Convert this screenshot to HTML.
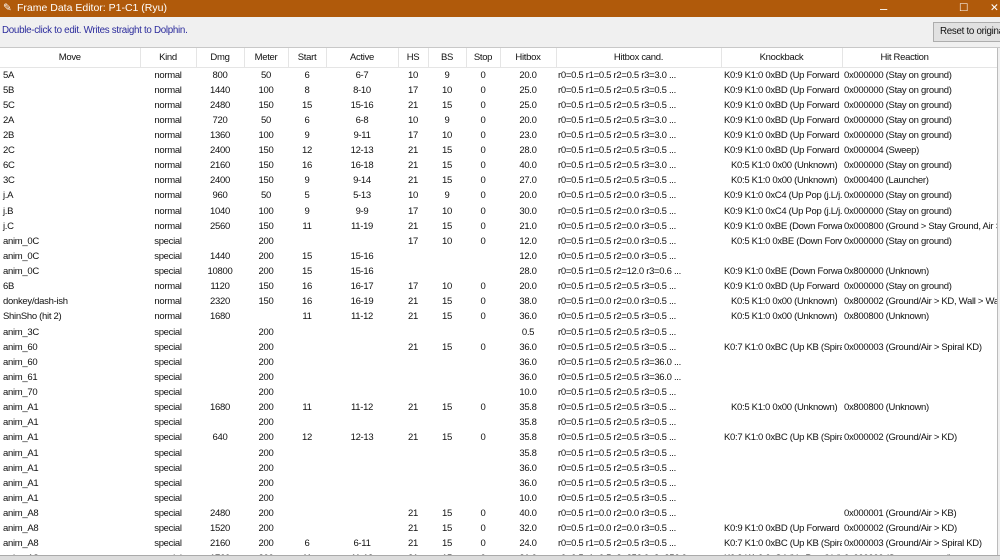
<!DOCTYPE html>
<html><head><meta charset="utf-8"><style>
*{margin:0;padding:0;box-sizing:border-box}
body{width:1000px;height:560px;overflow:hidden;background:#f0f0f0;font-family:"Liberation Sans",sans-serif;font-size:9.5px;letter-spacing:-0.3px;color:#111;position:relative}
.title{position:absolute;left:0;top:0;width:1000px;height:17px;background:#b05a0b;color:#fff;font-size:10.5px;line-height:17px;letter-spacing:0}
.title span{position:absolute;left:17px}
.tb{position:absolute;top:17px;left:0;width:1000px;height:31px;background:#f0f0f0;border-bottom:1px solid #c8c8c8}
.tb .msg{position:absolute;left:2px;top:8px;color:#2b2b9c;font-size:9.8px}
.btn{position:absolute;left:933px;top:5px;width:80px;height:20px;border:1px solid #adadad;background:#e1e1e1;font-size:9.8px;line-height:18px;padding-left:6px;white-space:nowrap;overflow:hidden}
.grid{position:absolute;left:0;top:48px;width:998px;height:507px;background:#fff;overflow:hidden;border-right:1px solid #bbb}
.bot{position:absolute;left:0;top:555px;width:1000px;height:5px;background:#dcdcdc;border-top:1px solid #aaa}
table{border-collapse:collapse;table-layout:fixed;width:1100px}
td,th{white-space:nowrap;overflow:hidden;padding:0;font-weight:normal}
th{height:19px;border-right:1px solid #e5e5e5;border-bottom:1px solid #e5e5e5;text-align:center}
th:last-child{text-align:left;padding-left:38px}
td{height:15.13px;line-height:15px;text-align:center}
td:first-child{text-align:left;padding-left:3px}
td:nth-child(11),td:nth-child(12),td:nth-child(13){text-align:left;padding-left:2px}
td:nth-child(12){padding-left:3px}
.i{padding-left:10px!important}
</style></head><body>
<div class="title"><span>Frame Data Editor: P1-C1 (Ryu)</span><span style="left:3px">✎</span><span style="left:880px;font-size:13px">–</span><span style="left:959px">☐</span><span style="left:990px">✕</span></div>
<div class="tb"><div class="msg">Double-click to edit. Writes straight to Dolphin.</div><div class="btn">Reset to original</div></div>
<div class="grid"><table>
<colgroup><col style="width:140px"><col style="width:56px"><col style="width:48px"><col style="width:44px"><col style="width:38px"><col style="width:72px"><col style="width:30px"><col style="width:38px"><col style="width:34px"><col style="width:56px"><col style="width:165px"><col style="width:121px"><col style="width:258px"></colgroup>
<tr><th>Move</th><th>Kind</th><th>Dmg</th><th>Meter</th><th>Start</th><th>Active</th><th>HS</th><th>BS</th><th>Stop</th><th>Hitbox</th><th>Hitbox cand.</th><th>Knockback</th><th>Hit Reaction</th></tr>
<tr><td>5A</td><td>normal</td><td>800</td><td>50</td><td>6</td><td>6-7</td><td>10</td><td>9</td><td>0</td><td>20.0</td><td>r0=0.5 r1=0.5 r2=0.5 r3=3.0 ...</td><td>K0:9 K1:0 0xBD (Up Forward K</td><td>0x000000 (Stay on ground)</td></tr>
<tr><td>5B</td><td>normal</td><td>1440</td><td>100</td><td>8</td><td>8-10</td><td>17</td><td>10</td><td>0</td><td>25.0</td><td>r0=0.5 r1=0.5 r2=0.5 r3=0.5 ...</td><td>K0:9 K1:0 0xBD (Up Forward K</td><td>0x000000 (Stay on ground)</td></tr>
<tr><td>5C</td><td>normal</td><td>2480</td><td>150</td><td>15</td><td>15-16</td><td>21</td><td>15</td><td>0</td><td>25.0</td><td>r0=0.5 r1=0.5 r2=0.5 r3=0.5 ...</td><td>K0:9 K1:0 0xBD (Up Forward K</td><td>0x000000 (Stay on ground)</td></tr>
<tr><td>2A</td><td>normal</td><td>720</td><td>50</td><td>6</td><td>6-8</td><td>10</td><td>9</td><td>0</td><td>20.0</td><td>r0=0.5 r1=0.5 r2=0.5 r3=3.0 ...</td><td>K0:9 K1:0 0xBD (Up Forward K</td><td>0x000000 (Stay on ground)</td></tr>
<tr><td>2B</td><td>normal</td><td>1360</td><td>100</td><td>9</td><td>9-11</td><td>17</td><td>10</td><td>0</td><td>23.0</td><td>r0=0.5 r1=0.5 r2=0.5 r3=3.0 ...</td><td>K0:9 K1:0 0xBD (Up Forward K</td><td>0x000000 (Stay on ground)</td></tr>
<tr><td>2C</td><td>normal</td><td>2400</td><td>150</td><td>12</td><td>12-13</td><td>21</td><td>15</td><td>0</td><td>28.0</td><td>r0=0.5 r1=0.5 r2=0.5 r3=0.5 ...</td><td>K0:9 K1:0 0xBD (Up Forward K</td><td>0x000004 (Sweep)</td></tr>
<tr><td>6C</td><td>normal</td><td>2160</td><td>150</td><td>16</td><td>16-18</td><td>21</td><td>15</td><td>0</td><td>40.0</td><td>r0=0.5 r1=0.5 r2=0.5 r3=3.0 ...</td><td class="i">K0:5 K1:0 0x00 (Unknown)</td><td>0x000000 (Stay on ground)</td></tr>
<tr><td>3C</td><td>normal</td><td>2400</td><td>150</td><td>9</td><td>9-14</td><td>21</td><td>15</td><td>0</td><td>27.0</td><td>r0=0.5 r1=0.5 r2=0.5 r3=0.5 ...</td><td class="i">K0:5 K1:0 0x00 (Unknown)</td><td>0x000400 (Launcher)</td></tr>
<tr><td>j.A</td><td>normal</td><td>960</td><td>50</td><td>5</td><td>5-13</td><td>10</td><td>9</td><td>0</td><td>20.0</td><td>r0=0.5 r1=0.5 r2=0.0 r3=0.5 ...</td><td>K0:9 K1:0 0xC4 (Up Pop (j.L/j.</td><td>0x000000 (Stay on ground)</td></tr>
<tr><td>j.B</td><td>normal</td><td>1040</td><td>100</td><td>9</td><td>9-9</td><td>17</td><td>10</td><td>0</td><td>30.0</td><td>r0=0.5 r1=0.5 r2=0.0 r3=0.5 ...</td><td>K0:9 K1:0 0xC4 (Up Pop (j.L/j.</td><td>0x000000 (Stay on ground)</td></tr>
<tr><td>j.C</td><td>normal</td><td>2560</td><td>150</td><td>11</td><td>11-19</td><td>21</td><td>15</td><td>0</td><td>21.0</td><td>r0=0.5 r1=0.5 r2=0.0 r3=0.5 ...</td><td>K0:9 K1:0 0xBE (Down Forwar</td><td>0x000800 (Ground &gt; Stay Ground, Air &gt;</td></tr>
<tr><td>anim_0C</td><td>special</td><td></td><td>200</td><td></td><td></td><td>17</td><td>10</td><td>0</td><td>12.0</td><td>r0=0.5 r1=0.5 r2=0.0 r3=0.5 ...</td><td class="i">K0:5 K1:0 0xBE (Down Forwar</td><td>0x000000 (Stay on ground)</td></tr>
<tr><td>anim_0C</td><td>special</td><td>1440</td><td>200</td><td>15</td><td>15-16</td><td></td><td></td><td></td><td>12.0</td><td>r0=0.5 r1=0.5 r2=0.0 r3=0.5 ...</td><td></td><td></td></tr>
<tr><td>anim_0C</td><td>special</td><td>10800</td><td>200</td><td>15</td><td>15-16</td><td></td><td></td><td></td><td>28.0</td><td>r0=0.5 r1=0.5 r2=12.0 r3=0.6 ...</td><td>K0:9 K1:0 0xBE (Down Forwar</td><td>0x800000 (Unknown)</td></tr>
<tr><td>6B</td><td>normal</td><td>1120</td><td>150</td><td>16</td><td>16-17</td><td>17</td><td>10</td><td>0</td><td>20.0</td><td>r0=0.5 r1=0.5 r2=0.5 r3=0.5 ...</td><td>K0:9 K1:0 0xBD (Up Forward K</td><td>0x000000 (Stay on ground)</td></tr>
<tr><td>donkey/dash-ish</td><td>normal</td><td>2320</td><td>150</td><td>16</td><td>16-19</td><td>21</td><td>15</td><td>0</td><td>38.0</td><td>r0=0.5 r1=0.0 r2=0.0 r3=0.5 ...</td><td class="i">K0:5 K1:0 0x00 (Unknown)</td><td>0x800002 (Ground/Air &gt; KD, Wall &gt; Wa</td></tr>
<tr><td>ShinSho (hit 2)</td><td>normal</td><td>1680</td><td></td><td>11</td><td>11-12</td><td>21</td><td>15</td><td>0</td><td>36.0</td><td>r0=0.5 r1=0.5 r2=0.5 r3=0.5 ...</td><td class="i">K0:5 K1:0 0x00 (Unknown)</td><td>0x800800 (Unknown)</td></tr>
<tr><td>anim_3C</td><td>special</td><td></td><td>200</td><td></td><td></td><td></td><td></td><td></td><td>0.5</td><td>r0=0.5 r1=0.5 r2=0.5 r3=0.5 ...</td><td></td><td></td></tr>
<tr><td>anim_60</td><td>special</td><td></td><td>200</td><td></td><td></td><td>21</td><td>15</td><td>0</td><td>36.0</td><td>r0=0.5 r1=0.5 r2=0.5 r3=0.5 ...</td><td>K0:7 K1:0 0xBC (Up KB (Spiral</td><td>0x000003 (Ground/Air &gt; Spiral KD)</td></tr>
<tr><td>anim_60</td><td>special</td><td></td><td>200</td><td></td><td></td><td></td><td></td><td></td><td>36.0</td><td>r0=0.5 r1=0.5 r2=0.5 r3=36.0 ...</td><td></td><td></td></tr>
<tr><td>anim_61</td><td>special</td><td></td><td>200</td><td></td><td></td><td></td><td></td><td></td><td>36.0</td><td>r0=0.5 r1=0.5 r2=0.5 r3=36.0 ...</td><td></td><td></td></tr>
<tr><td>anim_70</td><td>special</td><td></td><td>200</td><td></td><td></td><td></td><td></td><td></td><td>10.0</td><td>r0=0.5 r1=0.5 r2=0.5 r3=0.5 ...</td><td></td><td></td></tr>
<tr><td>anim_A1</td><td>special</td><td>1680</td><td>200</td><td>11</td><td>11-12</td><td>21</td><td>15</td><td>0</td><td>35.8</td><td>r0=0.5 r1=0.5 r2=0.5 r3=0.5 ...</td><td class="i">K0:5 K1:0 0x00 (Unknown)</td><td>0x800800 (Unknown)</td></tr>
<tr><td>anim_A1</td><td>special</td><td></td><td>200</td><td></td><td></td><td></td><td></td><td></td><td>35.8</td><td>r0=0.5 r1=0.5 r2=0.5 r3=0.5 ...</td><td></td><td></td></tr>
<tr><td>anim_A1</td><td>special</td><td>640</td><td>200</td><td>12</td><td>12-13</td><td>21</td><td>15</td><td>0</td><td>35.8</td><td>r0=0.5 r1=0.5 r2=0.5 r3=0.5 ...</td><td>K0:7 K1:0 0xBC (Up KB (Spiral</td><td>0x000002 (Ground/Air &gt; KD)</td></tr>
<tr><td>anim_A1</td><td>special</td><td></td><td>200</td><td></td><td></td><td></td><td></td><td></td><td>35.8</td><td>r0=0.5 r1=0.5 r2=0.5 r3=0.5 ...</td><td></td><td></td></tr>
<tr><td>anim_A1</td><td>special</td><td></td><td>200</td><td></td><td></td><td></td><td></td><td></td><td>36.0</td><td>r0=0.5 r1=0.5 r2=0.5 r3=0.5 ...</td><td></td><td></td></tr>
<tr><td>anim_A1</td><td>special</td><td></td><td>200</td><td></td><td></td><td></td><td></td><td></td><td>36.0</td><td>r0=0.5 r1=0.5 r2=0.5 r3=0.5 ...</td><td></td><td></td></tr>
<tr><td>anim_A1</td><td>special</td><td></td><td>200</td><td></td><td></td><td></td><td></td><td></td><td>10.0</td><td>r0=0.5 r1=0.5 r2=0.5 r3=0.5 ...</td><td></td><td></td></tr>
<tr><td>anim_A8</td><td>special</td><td>2480</td><td>200</td><td></td><td></td><td>21</td><td>15</td><td>0</td><td>40.0</td><td>r0=0.5 r1=0.0 r2=0.0 r3=0.5 ...</td><td></td><td>0x000001 (Ground/Air &gt; KB)</td></tr>
<tr><td>anim_A8</td><td>special</td><td>1520</td><td>200</td><td></td><td></td><td>21</td><td>15</td><td>0</td><td>32.0</td><td>r0=0.5 r1=0.0 r2=0.0 r3=0.5 ...</td><td>K0:9 K1:0 0xBD (Up Forward K</td><td>0x000002 (Ground/Air &gt; KD)</td></tr>
<tr><td>anim_A8</td><td>special</td><td>2160</td><td>200</td><td>6</td><td>6-11</td><td>21</td><td>15</td><td>0</td><td>24.0</td><td>r0=0.5 r1=0.5 r2=0.5 r3=0.5 ...</td><td>K0:7 K1:0 0xBC (Up KB (Spiral</td><td>0x000003 (Ground/Air &gt; Spiral KD)</td></tr>
<tr><td>anim_A8</td><td>special</td><td>1760</td><td>200</td><td>11</td><td>11-13</td><td>21</td><td>15</td><td>0</td><td>31.0</td><td>r0=0.5 r1=0.5 r2=256.0 r3=256.0 ...</td><td>K0:9 K1:0 0xC4 (Up Pop (j.L/j.</td><td>0x000000 (Stay on ground)</td></tr>
</table></div>
<div class="bot"></div>
</body></html>
